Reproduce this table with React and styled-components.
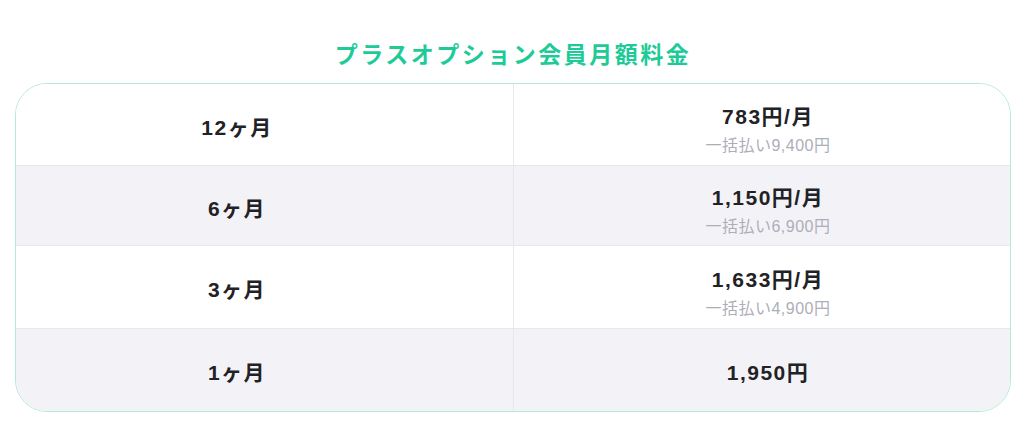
import React from "react";
import styled, { createGlobalStyle } from "styled-components";

const GlobalStyle = createGlobalStyle`
  body {
    margin: 0;
    background: #ffffff;
    font-family: "Liberation Sans", "Noto Sans CJK JP", sans-serif;
  }
`;

const Page = styled.div`
  padding: 38px 13px 0 15px;
`;

const Title = styled.h2`
  margin: 0 0 15px;
  text-align: center;
  font-family: "Noto Sans CJK JP", sans-serif;
  font-size: 23px;
  line-height: 30px;
  font-weight: 700;
  letter-spacing: 2.5px;
  color: #1ecb98;
`;

const Table = styled.div`
  border: 1px solid #b4ead6;
  border-radius: 32px;
  overflow: hidden;
  background: #ffffff;
`;

const Row = styled.div`
  display: grid;
  grid-template-columns: 1fr 1fr;
  height: ${(p) => p.$h}px;
  box-sizing: border-box;
  background: ${(p) => (p.$shade ? "#f3f3f7" : "#ffffff")};
  border-top: ${(p) => (p.$first ? "none" : "1px solid #e7e7ed")};
`;

const Cell = styled.div`
  display: flex;
  flex-direction: column;
  align-items: center;
  justify-content: center;
  padding-top: 6px;
  box-sizing: border-box;
`;

const TermCell = styled(Cell)`
  padding-right: 55px;
`;

const PriceCell = styled(Cell)`
  border-left: 1px solid #e7e7ed;
  padding-left: 12px;
  padding-top: ${(p) => (p.$lump ? 11 : 6)}px;
`;

const Term = styled.div`
  font-family: "Liberation Sans", "Noto Sans CJK JP", sans-serif;
  font-size: 21px;
  font-weight: 700;
  letter-spacing: 1.5px;
  color: #222226;
  line-height: 26px;
`;

const Price = styled(Term)``;

const Lump = styled.div`
  font-family: "Liberation Sans", "Noto Sans CJK JP", sans-serif;
  font-size: 16px;
  letter-spacing: 0.5px;
  color: #aeaeb9;
  line-height: 20px;
  margin-top: 6px;
`;

const plans = [
  { term: "12ヶ月", price: "783円/月", lump: "一括払い9,400円", h: 81 },
  { term: "6ヶ月", price: "1,150円/月", lump: "一括払い6,900円", h: 80 },
  { term: "3ヶ月", price: "1,633円/月", lump: "一括払い4,900円", h: 83 },
  { term: "1ヶ月", price: "1,950円", h: 83 },
];

export default function App() {
  return (
    <>
      <GlobalStyle />
      <Page>
        <Title>プラスオプション会員月額料金</Title>
        <Table>
          {plans.map((p, i) => (
            <Row key={p.term} $h={p.h} $shade={i % 2 === 1} $first={i === 0}>
              <TermCell>
                <Term>{p.term}</Term>
              </TermCell>
              <PriceCell $lump={!!p.lump}>
                <Price>{p.price}</Price>
                {p.lump && <Lump>{p.lump}</Lump>}
              </PriceCell>
            </Row>
          ))}
        </Table>
      </Page>
    </>
  );
}
